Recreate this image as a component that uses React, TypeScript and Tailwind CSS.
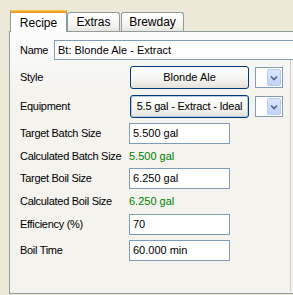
import React from 'react';

const Row: React.FC<{ label: string; className?: string; children: React.ReactNode }> = ({ label, className, children }) => (
  <div className={`flex items-center pl-[10px] ${className ?? ''}`}>
    <span className="w-[109px] shrink-0 tracking-[-0.3px] whitespace-nowrap">{label}</span>
    {children}
  </div>
);

const Field: React.FC<{ value: string }> = ({ value }) => (
  <div className="w-[101px] h-[21px] border border-[#7f9db9] bg-white pl-[3px] flex items-center">{value}</div>
);

const XpButton: React.FC<{ text: string; focused?: boolean }> = ({ text, focused }) => (
  <div
    className={`ml-[1px] w-[119px] h-[23px] rounded-[3px] border border-[#003c74] bg-[linear-gradient(#ffffff,#f4f4f0_60%,#e3e0d6)] flex items-center justify-center whitespace-nowrap ${
      focused ? 'shadow-[inset_0_0_0_1px_#b7c8e9] tracking-[-0.2px]' : ''
    }`}
  >
    {text}
  </div>
);

const Combo: React.FC = () => (
  <div className="ml-[6px] w-[28px] h-[21px] border border-[#7f9db9] bg-white flex items-center justify-end pr-[1px]">
    <div className="w-[14px] h-[17px] rounded-[2px] border border-[#b9cbf3] bg-[linear-gradient(#dce6fd,#c1d3fb)] flex items-center justify-center">
      <svg width="8" height="6" viewBox="0 0 8 6">
        <path d="M1 1.5 L4 4.5 L7 1.5" fill="none" stroke="#4d6185" strokeWidth="1.6" />
      </svg>
    </div>
  </div>
);

const Tab: React.FC<{ text: string; active?: boolean; className?: string }> = ({ text, active, className }) =>
  active ? (
    <div className={`relative z-10 -mb-px h-[22px] border-x border-[#919b9c] bg-white flex flex-col ${className ?? ''}`}>
      <div className="h-[3px] -mx-px rounded-t-[3px] bg-[linear-gradient(#ffc83c,#e68b2c)]" />
      <div className="flex-1 flex items-center justify-center text-[12px]">{text}</div>
    </div>
  ) : (
    <div
      className={`h-[19px] rounded-t-[3px] border border-b-0 border-[#919b9c] bg-[linear-gradient(#ffffff,#f3f3ef_70%,#e6e5de)] flex items-center justify-center text-[12px] ${className ?? ''}`}
    >
      {text}
    </div>
  );

export default function App() {
  return (
    <div className="w-[293px] h-[295px] overflow-hidden bg-[#ece9d8] font-['Liberation_Sans',Arial,sans-serif] text-[11px] text-black leading-none">
      <div className="pl-[9px] pt-[10px]">
        <div className="flex items-end h-[21px] pl-px">
          <Tab text="Recipe" active className="w-[57px]" />
          <Tab text="Extras" className="w-[53px]" />
          <Tab text="Brewday" className="w-[63px] ml-[1px]" />
        </div>
        <div className="w-[300px] h-[263px] border border-[#919b9c] bg-[linear-gradient(#fcfcfe,#f4f3ee_60px)]">
          <div className="flex items-center pl-[10px] mt-[8px]">
            <span className="w-[34px] shrink-0 tracking-[-0.3px]">Name</span>
            <div className="w-[260px] h-[20px] border border-[#7f9db9] bg-white pl-[3px] flex items-center">Bt: Blonde Ale - Extract</div>
          </div>
          <div className="w-[281px] h-[231px] border-r border-[#d0cec3] pt-[6px] flex flex-col">
            <Row label="Style">
              <XpButton text="Blonde Ale" />
              <Combo />
            </Row>
            <Row label="Equipment" className="mt-[6px]">
              <XpButton text="5.5 gal - Extract - Ideal" focused />
              <Combo />
            </Row>
            <Row label="Target Batch Size" className="mt-[5px]">
              <Field value="5.500 gal" />
            </Row>
            <Row label="Calculated Batch Size" className="h-[24px]">
              <span className="text-[#008000]">5.500 gal</span>
            </Row>
            <Row label="Target Boil Size">
              <Field value="6.250 gal" />
            </Row>
            <Row label="Calculated Boil Size" className="h-[25px]">
              <span className="text-[#008000]">6.250 gal</span>
            </Row>
            <Row label="Efficiency (%)">
              <Field value="70" />
            </Row>
            <Row label="Boil Time" className="mt-[5px]">
              <Field value="60.000 min" />
            </Row>
          </div>
        </div>
      </div>
    </div>
  );
}
